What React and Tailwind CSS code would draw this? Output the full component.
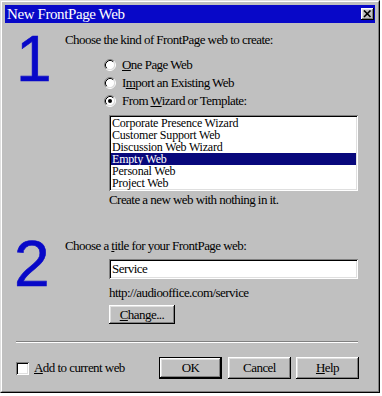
import React from 'react'

const sunken = 'shadow-[inset_1px_1px_0_#808080,inset_-1px_-1px_0_#fff,inset_2px_2px_0_#000,inset_-2px_-2px_0_#dfdfdf]'
const raised = 'shadow-[inset_-1px_-1px_0_#000,inset_1px_1px_0_#fff,inset_-2px_-2px_0_#808080,inset_2px_2px_0_#dfdfdf]'

function Radio({ checked, children }) {
  return (
    <div className="flex items-center h-[18px]">
      <svg width="12" height="12" viewBox="0 0 12 12" className="shrink-0">
        <circle cx="6" cy="6" r="4.5" fill="#fff" />
        <path d="M2.11 9.89 A5.5 5.5 0 0 1 9.89 2.11" fill="none" stroke="#808080" strokeWidth="1" />
        <path d="M9.89 2.11 A5.5 5.5 0 0 1 2.11 9.89" fill="none" stroke="#fff" strokeWidth="1" />
        <path d="M2.82 9.18 A4.5 4.5 0 0 1 9.18 2.82" fill="none" stroke="#000" strokeWidth="1" />
        <path d="M9.18 2.82 A4.5 4.5 0 0 1 2.82 9.18" fill="none" stroke="#dfdfdf" strokeWidth="1" />
        {checked && <circle cx="6" cy="6" r="2" fill="#000" />}
      </svg>
      <span className="ml-[6px] leading-[16px]">{children}</span>
    </div>
  )
}

function Button({ children, isDefault, className = '' }) {
  return (
    <div className={`flex items-center justify-center bg-[#c0c0c0] ${isDefault ? 'border border-black' : ''} ${className}`}>
      <div className={`w-full h-full flex items-center justify-center ${raised}`}>{children}</div>
    </div>
  )
}

const webs = ['Corporate Presence Wizard', 'Customer Support Web', 'Discussion Web Wizard', 'Empty Web', 'Personal Web', 'Project Web']

export default function App() {
  return (
    <div className="w-[382px] h-[396px] bg-white font-['Liberation_Serif',serif] text-[13px] tracking-[-0.55px] text-black">
      {/* window frame */}
      <div className="w-[380px] h-[393px] bg-[#c0c0c0] border border-t-[#dfdfdf] border-l-[#dfdfdf] border-r-black border-b-black">
        <div className="h-full border border-t-white border-l-white border-r-[#808080] border-b-[#808080] p-[3px] flex flex-col">
          {/* title bar */}
          <div className="h-[18px] bg-[#0808c8] flex items-center justify-between pl-[2px] pr-[1px]">
            <span className="text-white text-[15px] tracking-[-0.4px] leading-[18px]">New FrontPage Web</span>
            <div className={`w-[13px] h-[12px] bg-[#c0c0c0] flex items-center justify-center ${raised}`}>
              <svg width="9" height="8" viewBox="0 0 9 8">
                <path d="M1 0.5 L7.5 7 M7.5 0.5 L1 7" stroke="#000" strokeWidth="1.6" />
              </svg>
            </div>
          </div>

          {/* section 1 */}
          <div className="flex">
            <div className="w-[60px] pl-[11px] pt-[4px] font-['Liberation_Sans',sans-serif] text-[64px] leading-[64px] tracking-normal text-[#0808c8] [-webkit-text-stroke:0.6px_#0808c8]">1</div>
            <div className="pt-[9px] flex flex-col">
              <div className="leading-[16px]">Choose the kind of FrontPage web to create:</div>
              <div className="ml-[39px] mt-[8px]">
                <Radio><span className="underline">O</span>ne Page Web</Radio>
                <Radio>I<span className="underline">m</span>port an Existing Web</Radio>
                <Radio checked>From <span className="underline">W</span>izard or Template:</Radio>
              </div>
              <div className={`ml-[44px] mt-[5px] w-[249px] h-[76px] bg-white p-[2px] text-[12px] tracking-[-0.2px] ${sunken}`}>
                {webs.map(w => (
                  <div key={w} className={`h-[12px] leading-[12px] pl-[1px] ${w === 'Empty Web' ? 'bg-[#08087c] text-white' : ''}`}>{w}</div>
                ))}
              </div>
              <div className="ml-[44px] mt-[1px] leading-[16px]">Create a new web with nothing in it.</div>
            </div>
          </div>

          {/* section 2 */}
          <div className="flex mt-[24px]">
            <div className="w-[60px] pl-[9px] font-['Liberation_Sans',sans-serif] text-[64px] leading-[64px] tracking-normal text-[#0808c8] [-webkit-text-stroke:0.6px_#0808c8]">2</div>
            <div className="pt-[6px] flex flex-col">
              <div className="leading-[16px]">Choose a <span className="underline">t</span>itle for your FrontPage web:</div>
              <div className={`ml-[44px] mt-[5px] w-[249px] h-[20px] bg-white pl-[3px] flex items-center ${sunken}`}>Service</div>
              <div className="ml-[44px] mt-[6px] leading-[16px]">http://audiooffice.com/service</div>
              <Button className="ml-[44px] mt-[4px] w-[66px] h-[19px]"><span className="underline">C</span>hange...</Button>
            </div>
          </div>

          {/* separator */}
          <div className="ml-[11px] mt-[17px] w-[342px] h-[2px] border-t border-t-[#808080] border-b border-b-white" />

          {/* bottom row */}
          <div className="flex items-center mt-[14px] h-[22px]">
            <div className={`ml-[11px] w-[13px] h-[13px] bg-white ${sunken}`} />
            <span className="ml-[5px] leading-[16px]"><span className="underline">A</span>dd to current web</span>
            <Button isDefault className="ml-[auto] w-[63px] h-[22px]">OK</Button>
            <Button className="ml-[6px] w-[63px] h-[22px]">Cancel</Button>
            <Button className="ml-[5px] mr-[16px] w-[63px] h-[22px]"><span className="underline">H</span>elp</Button>
          </div>
        </div>
      </div>
    </div>
  )
}
